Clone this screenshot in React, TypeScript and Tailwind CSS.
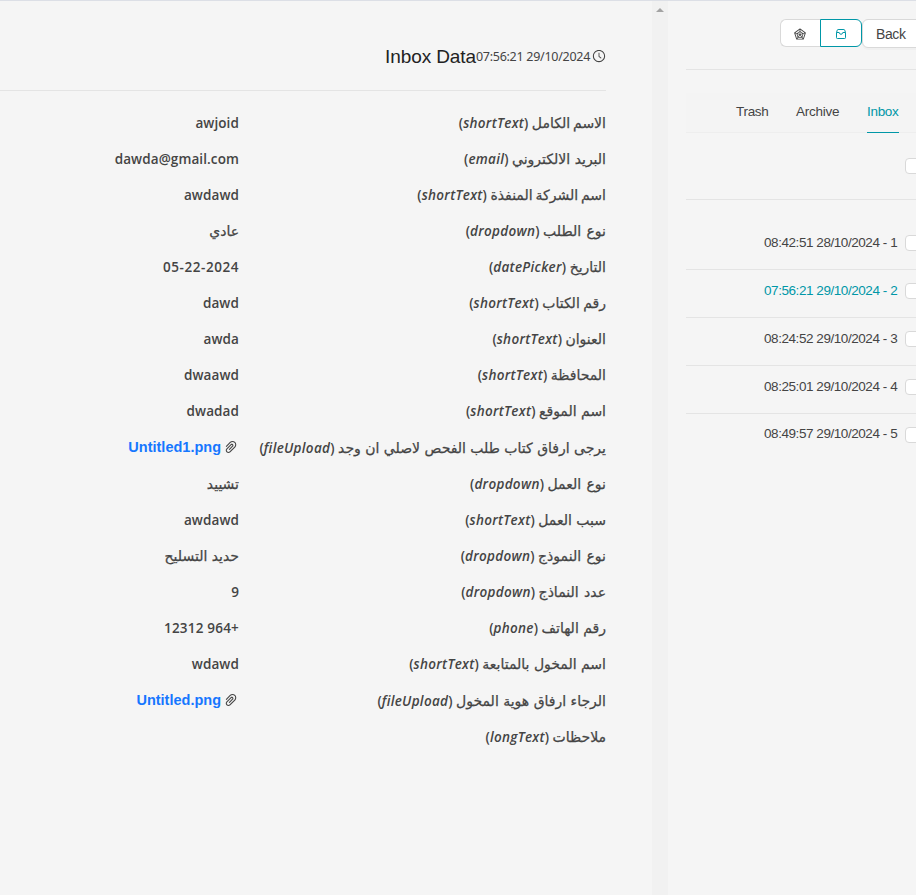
import React from 'react';
import { AiOutlineClockCircle, AiOutlineRadarChart, AiOutlinePaperClip } from 'react-icons/ai';

type Field = { label: string; type: string; value?: string; arabic?: boolean; file?: string; spacing?: string };

const fields: Field[] = [
  { label: 'الاسم الكامل', type: 'shortText', value: 'awjoid', spacing: '[word-spacing:-1.5px]' },
  { label: 'البريد الالكتروني', type: 'email', value: 'dawda@gmail.com' },
  { label: 'اسم الشركة المنفذة', type: 'shortText', value: 'awdawd', spacing: '[word-spacing:-1.5px]' },
  { label: 'نوع الطلب', type: 'dropdown', value: 'عادي', arabic: true, spacing: '[word-spacing:1px]' },
  { label: 'التاريخ', type: 'datePicker', value: '05-22-2024' },
  { label: 'رقم الكتاب', type: 'shortText', value: 'dawd', spacing: '[word-spacing:-1px]' },
  { label: 'العنوان', type: 'shortText', value: 'awda' },
  { label: 'المحافظة', type: 'shortText', value: 'dwaawd' },
  { label: 'اسم الموقع', type: 'shortText', value: 'dwadad' },
  { label: 'يرجى ارفاق كتاب طلب الفحص لاصلي ان وجد', type: 'fileUpload', file: 'Untitled1.png' },
  { label: 'نوع العمل', type: 'dropdown', value: 'تشييد', arabic: true, spacing: '[word-spacing:1px]' },
  { label: 'سبب العمل', type: 'shortText', value: 'awdawd' },
  { label: 'نوع النموذج', type: 'dropdown', value: 'حديد التسليح', arabic: true, spacing: '[word-spacing:1px]' },
  { label: 'عدد النماذج', type: 'dropdown', value: '9', spacing: '[word-spacing:1px]' },
  { label: 'رقم الهاتف', type: 'phone', value: '+964 12312' },
  { label: 'اسم المخول بالمتابعة', type: 'shortText', value: 'wdawd' },
  { label: 'الرجاء ارفاق هوية المخول', type: 'fileUpload', file: 'Untitled.png' },
  { label: 'ملاحظات', type: 'longText' },
];

const entries = [
  { time: '08:42:51', date: '28/10/2024', n: 1 },
  { time: '07:56:21', date: '29/10/2024', n: 2 },
  { time: '08:24:52', date: '29/10/2024', n: 3 },
  { time: '08:25:01', date: '29/10/2024', n: 4 },
  { time: '08:49:57', date: '29/10/2024', n: 5 },
];

const arabicText = "font-['DejaVu_Sans',sans-serif] text-[14px] tracking-normal font-normal [-webkit-text-stroke:0.25px_#444]";

function FieldRow({ f }: { f: Field }) {
  return (
    <div className={`flex ${f.file ? 'h-[37px] pt-px' : 'h-9'}`}>
      <div className="h-[22px] w-[367px] shrink-0 whitespace-nowrap leading-[22px]">
        <span className={`${arabicText} ${f.spacing ?? ''}`}>{f.label}</span>{' '}
        <span className="tracking-[0.3px]">(<em>{f.type}</em>)</span>
      </div>
      {f.file ? (
        <div className="flex h-[22px] items-center gap-[2px] font-['Liberation_Sans',sans-serif] font-bold text-[#1677ff]">
          <AiOutlinePaperClip className="-mt-0.5 size-[16px] text-[#444]" />
          <span className="text-[14.5px]">{f.file}</span>
        </div>
      ) : (
        <div className={`h-[22px] whitespace-nowrap leading-[22px] ${f.arabic ? arabicText : f.type === 'datePicker' ? 'tracking-[0.55px]' : f.type === 'phone' ? 'tracking-[0.2px]' : 'tracking-[0.1px]'}`}>
          {f.value}
        </div>
      )}
    </div>
  );
}

function Box() {
  return <span className="size-4 shrink-0 rounded border border-[#d9d9d9] bg-white" />;
}

export default function App() {
  return (
    <div className="flex h-[895px] w-[916px] overflow-hidden border-t border-[#dcdfe6] bg-[#f5f5f5] font-['Liberation_Sans',sans-serif] text-[14px] text-[#444]">
      <main dir="rtl" className="w-[652px] shrink-0 pr-[46px]">
        <header className="flex h-[90px] items-center border-b border-[#e4e4e4] pt-[22px]">
          <AiOutlineClockCircle className="-mt-0.5 ml-0.5 size-[14px]" />
          <span dir="ltr" className="pt-px font-['Noto_Sans',sans-serif] text-[12.5px] tracking-[-0.28px]">07:56:21 29/10/2024</span>
          <h1 className="whitespace-nowrap pt-0.5 text-[19px] tracking-[-0.1px] text-[#222]">Inbox Data</h1>
        </header>
        <section className="pt-[21px] font-['Open_Sans','DejaVu_Sans',sans-serif] text-[13.5px] font-[580]">
          {fields.map((f) => (
            <FieldRow key={f.label} f={f} />
          ))}
        </section>
      </main>

      <div className="flex w-4 shrink-0 justify-center bg-[#f1f1f1] pt-[7px]">
        <span className="h-0 w-0 border-x-[4px] border-b-[4px] border-x-transparent border-b-[#a3a3a3]" />
      </div>

      <aside className="w-[248px] shrink-0 pl-[18px]">
        <div className="flex h-[69px] border-b border-[#e4e4e4] pl-[94px] pt-[18px]">
          <button className="flex h-7 w-10 shrink-0 items-center justify-center rounded-l-md border border-r-0 border-[#d9d9d9] bg-white pr-px pt-0.5">
            <AiOutlineRadarChart className="size-[14px]" />
          </button>
          <button className="flex h-7 w-[42px] shrink-0 items-center justify-center rounded-r-md border border-[#0097a7] bg-white pt-0.5 text-[#0097a7]">
            <svg viewBox="0 0 12 12" className="size-3" fill="none" stroke="currentColor">
              <path d="M1.5 4.5v5.2q0 .8.8.8h7.4q.8 0 .8-.8V4.5M1.5 4.5h2.7q.3 1.8 1.8 1.8t1.8-1.8h2.7M1.5 4.5L2.3 2.1q.2-.6.8-.6h5.8q.6 0 .8.6l.8 2.4" />
            </svg>
          </button>
          <button className="h-[29px] w-[70px] shrink-0 rounded-md border border-[#d9d9d9] bg-white pl-[13px] pt-px text-left tracking-[-0.4px] shadow-[0_2px_0_rgba(0,0,0,0.02)]">Back</button>
        </div>

        <nav className="mt-[23px] flex h-10 items-start border-b border-[#eeeeee] bg-[#f4f4f4] pl-[50px] text-[13.5px] tracking-[-0.3px]">
          <span className="h-10 w-[60px] pt-[9px]">Trash</span>
          <span className="h-10 w-[71px] pt-[9px] tracking-[-0.25px]">Archive</span>
          <span className="h-10 border-b border-[#0097a7] pt-[9px] text-[#0097a7]">Inbox</span>
        </nav>

        <div className="flex h-[67px] items-center border-b border-[#e4e4e4] pl-[219px]">
          <Box />
        </div>

        <ul className="pt-[22px]">
          {entries.map((e) => (
            <li
              key={e.n}
              className={`flex items-center gap-[7px] whitespace-nowrap pb-[6px] pl-[78px] ${e.n < 5 ? 'h-12 border-b border-[#e4e4e4]' : 'h-[47px]'} ${e.n === 2 ? 'text-[#0097a7]' : ''}`}
            >
              <span className={`w-[134px] shrink-0 text-[13.5px] tracking-[-0.44px] ${e.n === 5 ? 'pb-px' : 'pt-0.5'}`}>{e.time} {e.date} - {e.n}</span>
              <Box />
            </li>
          ))}
        </ul>
      </aside>
    </div>
  );
}
